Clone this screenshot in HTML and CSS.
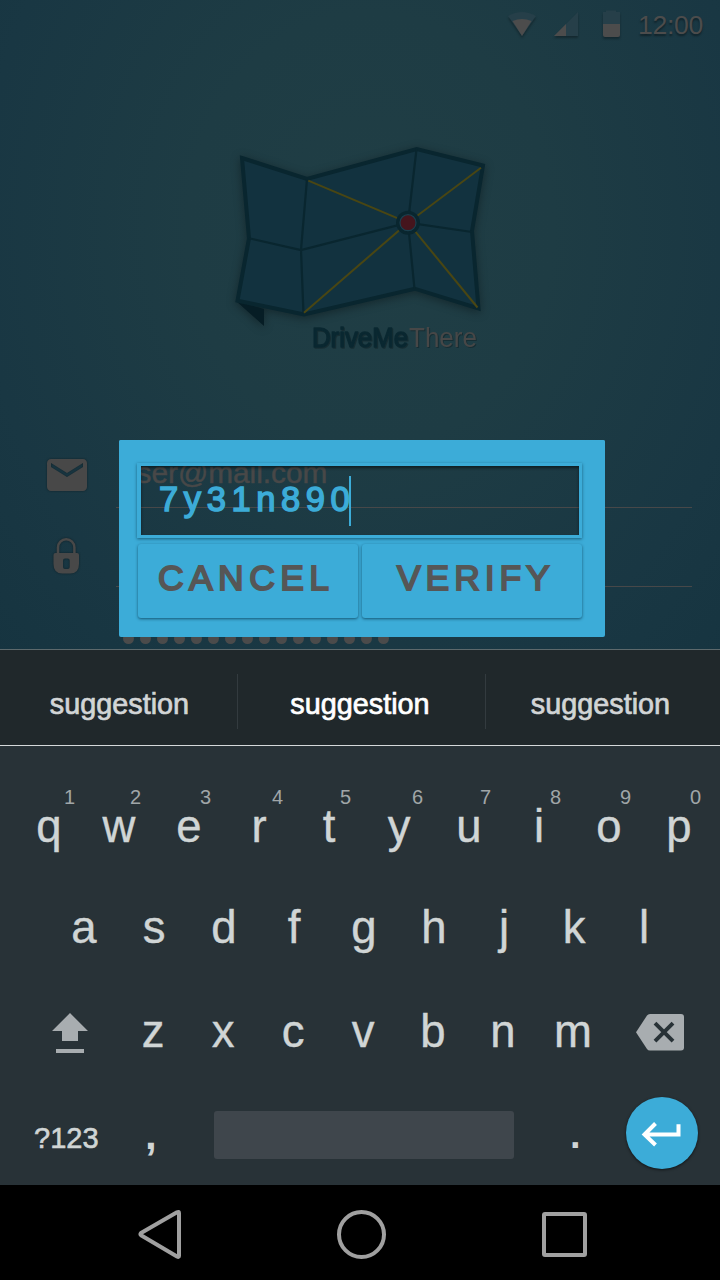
FILE: index.html
```html
<!DOCTYPE html>
<html lang="en">
<head>
<meta charset="utf-8">
<title>DriveMeThere</title>
<link rel="stylesheet" href="styles.css">
</head>
<body>
<div class="phone">
  <main class="login">
    <header class="status">
      <svg class="status-icons" width="126" height="50" viewBox="504 0 126 50">
        <path d="M508 16Q522 8 536 16L522 36Z" fill="#263f49"/>
        <path d="M512.500 21Q522 17 531.500 21L522 36Z" fill="#4c4c4c"/>
        <path d="M578 12V36H554Z" fill="#263f49"/>
        <path d="M566 24V36H554Z" fill="#4c4c4c"/>
        <path d="M603 12h3v-1.500h10v1.500h4V24h-17Z" fill="#263f49"/>
        <path d="M603 24h17v11q0 2-2 2h-13q-2 0-2-2Z" fill="#4c4c4c"/>
      </svg>
      <span class="clock">12:00</span>
    </header>

    <svg class="logo" width="280" height="230" viewBox="220 130 280 230">
      <g class="map">
        <path d="M236 301L264 309V326Z" fill="#061d25"/>
        <path d="M242 158L307 179L416.700 149L483 165.500L472 231L478.500 308.500L414.700 288.700L304 314.500L237.500 300.700L249 238.300Z" fill="#12323f" stroke="#09262f" stroke-width="4"/>
        <path d="M307 179L301 250L303.500 314M249 238.300L301 250L408 222.700L472 232M416.500 149L408 222.700L414.500 289" fill="none" stroke="#09262f" stroke-width="2.200"/>
        <path d="M308.300 180.700L408 222.700L481 167.700M304 312.700L408 222.700L477.500 307.500" fill="none" stroke="#494613" stroke-width="2"/>
      </g>
      <circle cx="408" cy="222.700" r="12" fill="#09262f"/>
      <circle cx="408" cy="222.700" r="8" fill="#45151d" stroke="#1b3f4e" stroke-width="1.200"/>
      <text class="brand brand-bold" x="312" y="346.500" textLength="96" lengthAdjust="spacingAndGlyphs">DriveMe</text>
      <text class="brand brand-light" x="409" y="346.500" textLength="68" lengthAdjust="spacingAndGlyphs">There</text>
    </svg>

    <div class="form">
      <div class="row">
        <div class="row-icon"><svg width="48" height="48" viewBox="0 0 24 24"><path fill="#484848" d="M20 4H4c-1.100 0-1.990.9-1.990 2L2 18c0 1.100.9 2 2 2h16c1.100 0 2-.9 2-2V6c0-1.100-.9-2-2-2zm0 4l-8 5-8-5V6l8 5 8-5v2z"/></svg></div>
        <div class="input">user@mail.com</div>
      </div>
      <div class="row row-lock">
        <div class="row-icon"><svg width="48" height="48" viewBox="0 0 48 48"><path d="M15 25V17.500a8.200 8.200 0 0 1 16.400 0V25" fill="none" stroke="#484848" stroke-width="2.500"/><path fill="#484848" fill-rule="evenodd" d="M12.500 23h21.500q2 0 2 2v9q0 9.500-9 9.500h-7.500q-9 0-9-9.500v-9q0-2 2-2ZM22 28.500q-2 0-2 2v6.500q0 2 2 2h2.700q2 0 2-2v-6.500q0-2-2-2Z"/></svg></div>
        <div class="input"></div>
      </div>
      <div class="dots"><i></i><i></i><i></i><i></i><i></i><i></i><i></i><i></i><i></i><i></i><i></i><i></i><i></i><i></i><i></i><i></i></div>
    </div>

    <section class="dialog">
      <div class="dialog-top">
        <div class="code"><span class="code-text">7y31n890</span><span class="caret"></span></div>
      </div>
      <div class="actions">
        <div class="button">CANCEL</div>
        <div class="button button-verify">VERIFY</div>
      </div>
    </section>
  </main>

  <div class="suggestions">
    <span>suggestion</span>
    <span class="current">suggestion</span>
    <span>suggestion</span>
  </div>

  <div class="keyboard">
    <div class="keys keys-top">
      <div class="key">q<sup>1</sup></div><div class="key">w<sup class="s2">2</sup></div><div class="key">e<sup class="s2">3</sup></div><div class="key">r<sup class="s4">4</sup></div><div class="key">t<sup class="s2">5</sup></div><div class="key">y<sup class="s3">6</sup></div><div class="key">u<sup class="s2">7</sup></div><div class="key">i<sup class="s2">8</sup></div><div class="key">o<sup class="s2">9</sup></div><div class="key">p<sup class="s2">0</sup></div>
    </div>
    <div class="keys keys-home">
      <div class="key">a</div><div class="key">s</div><div class="key">d</div><div class="key">f</div><div class="key">g</div><div class="key">h</div><div class="key">j</div><div class="key">k</div><div class="key">l</div>
    </div>
    <div class="keys">
      <div class="side"><svg width="36" height="42" viewBox="0 0 36 42"><path fill="#a8adb0" d="M18 0L36 18H26V28H10V18H0ZM4 36H32V40H4Z"/></svg></div>
      <div class="key">z</div><div class="key">x</div><div class="key">c</div><div class="key">v</div><div class="key">b</div><div class="key">n</div><div class="key">m</div>
      <div class="side side-right"><svg width="48" height="38" viewBox="0 0 48 38"><path fill="#a8adb0" d="M14 1H45Q48 1 48 4V34.500Q48 37.500 45 37.500H14Q12 37.500 11 36L0 19.200L11 2.500Q12 1 14 1Z"/><path d="M19 10.200L37 28.200M37 10.200L19 28.200" stroke="#283237" stroke-width="3.900"/></svg></div>
    </div>
    <div class="keys keys-bottom">
      <div class="mode">?123</div>
      <div class="punct">,</div>
      <div class="space"></div>
      <div class="punct dot">.</div>
      <div class="enter"><svg width="72" height="72" viewBox="0 0 72 72"><path d="M52.500 27.300V37.500H18M29.500 26.500L18.500 37.500L29.500 48" fill="none" stroke="#fff" stroke-width="4"/></svg></div>
    </div>
  </div>

  <nav class="nav">
    <svg width="720" height="95" viewBox="0 0 720 95" fill="none" stroke="#a0a0a0" stroke-width="4" stroke-linejoin="round">
      <path d="M141 48Q140 49.200 141 50.200L177 71.500Q179 72.500 179 71V28Q179 26.300 177 27.300Z"/>
      <circle cx="361.500" cy="49.500" r="22.500"/>
      <rect x="544" y="29" width="41" height="41" rx="1"/>
    </svg>
  </nav>
</div>
</body>
</html>
```

FILE: styles.css
```css
* { box-sizing: border-box; }
body { margin: 0; background: #000; font-family: "Liberation Sans", Arial, sans-serif; }
svg { display: block; }
.phone { width: 720px; height: 1280px; display: flex; flex-direction: column; overflow: hidden; }

.login {
  position: relative;
  height: 649px;
  overflow: hidden;
  background: radial-gradient(ellipse 520px 620px at 370px 230px, #203e45 0%, #1e3c44 35%, #193743 75%, #163440 100%);
}
.status { height: 50px; display: flex; justify-content: flex-end; align-items: center; padding-right: 18px; }
.status-icons { margin-right: 8px; filter: drop-shadow(0 2px 1px rgba(0, 0, 0, .3)); }
.clock { width: 64px; font-size: 26.500px; letter-spacing: -.3px; color: #4c4c4c; text-shadow: 0 2px 2px rgba(0, 0, 0, .4); white-space: nowrap; }
.logo { margin: 80px 0 0 220px; overflow: visible; }
.map { filter: drop-shadow(0 2px 5px rgba(0, 0, 0, .35)); }
.brand { font-size: 27px; filter: drop-shadow(1px 1px 0 rgba(0, 0, 0, .25)); }
.brand-bold { fill: #0a2831; stroke: #0a2831; stroke-width: 1.400px; stroke-linejoin: round; }
.brand-light { fill: #474747; }

.form { padding: 82px 28px 0 43px; }
.row { display: flex; height: 66px; }
.row-lock { height: 79px; }
.row-icon { width: 73px; padding-top: 9px; }
.row-lock .row-icon { padding-top: 22px; }
.row-icon svg { filter: drop-shadow(0 0 1px rgba(0, 0, 0, .4)); }
.input { flex: 1; border-bottom: 1px solid #474849; padding: 14px 0 0 4px; font-size: 29.800px; line-height: 34px; color: #484848; -webkit-text-stroke: .5px currentColor; }
.dots { display: flex; gap: 6px; padding: 46px 0 0 79.500px; }
.dots i { width: 11px; height: 11px; margin-right: .06px; border-radius: 50%; background: #4b4b4b; }

.dialog {
  position: absolute;
  left: 119px;
  top: 440px;
  width: 486px;
  height: 197px;
  border-radius: 2px;
  overflow: hidden;
  display: flex;
  flex-direction: column;
}
.dialog-top { position: relative; z-index: 1; height: 98px; border: solid #3cacd8; border-width: 23px 23px 0 18px; }
.code {
  display: flex;
  height: 75px;
  border: 3px solid #3cacd8;
  border-left-width: 4px;
  box-shadow: 0 1px 3px rgba(0, 40, 60, .6), inset 0 2px 3px rgba(0, 0, 0, .5);
  color: #3cacd8;
}
.code-text { padding: 12px 0 0 18px; font-size: 34.500px; line-height: 42px; -webkit-text-stroke: 1.500px currentColor; letter-spacing: 5.600px; width: 208px; white-space: nowrap; }
.caret { width: 2px; height: 50px; margin-top: 10px; background: #3cacd8; }
.actions { flex: 1; display: flex; gap: 4px; padding: 6px 23px 19px 19px; background: #3cacd8; }
.button {
  width: 220px;
  height: 74px;
  padding-left: 20px;
  border-radius: 3px;
  background: #3cacd8;
  box-shadow: 0 1px 3px rgba(0, 40, 60, .65);
  color: #565656;
  font-size: 35.500px;
  -webkit-text-stroke: 1.900px currentColor;
  line-height: 68px;
  letter-spacing: 5.400px;
}
.button-verify { padding-left: 35px; letter-spacing: 4.900px; }

.suggestions { height: 97px; display: grid; grid-template-columns: 237px 248px 235px; align-items: center; background: #20282b; border-top: 1px solid #5d696c; border-bottom: 1px solid #d5d9da; color: #d2d5d6; }
.suggestions span { height: 55px; line-height: 60px; text-align: center; font-size: 28.800px; -webkit-text-stroke: .7px currentColor; margin-top: 7px; padding-left: 2px; }
.suggestions span + span { border-left: 1px solid #333b3f; padding: 0 5px 0 0; }
.suggestions .current { color: #fff; padding-right: 3px; }

.keyboard { height: 439px; background: #283237; padding: 28px 0 0; color: #d0d5d5; }
.keys { display: flex; justify-content: center; height: 103px; }
.keys-top { padding-left: 8px; height: 102px; }
.keys-home { padding-left: 8px; }
.key { position: relative; width: 70px; text-align: center; font-size: 45.500px; line-height: 106px; -webkit-text-stroke: .4px currentColor; }
.keys-home .key { line-height: 104px; }
.key sup { position: absolute; left: 50px; top: 13px; line-height: 20px; font-size: 20px; color: #a0a6a8; -webkit-text-stroke: 0; }
.key .s2 { left: 46px; }
.key .s3 { left: 48px; }
.key .s4 { left: 48px; }
.side { width: 118px; padding: 34px 0 0 52px; }
.side-right { width: 112px; padding: 34px 0 0 28px; }
.keys-bottom { justify-content: flex-start; align-items: flex-start; height: 90px; padding-top: 15px; }
.mode { width: 110px; padding: 25px 0 0 34px; font-size: 29px; line-height: 32px; -webkit-text-stroke: .6px currentColor; }
.punct { width: 104px; padding: 15px 0 0 35px; font-size: 42px; line-height: 46px; font-weight: bold; }
.space { width: 300px; height: 48px; margin-top: 14px; border-radius: 3px; background: #3f464c; }
.punct.dot { width: 112px; padding-left: 56px; font-size: 38px; }
.enter { width: 72px; height: 72px; border-radius: 50%; background: #3cacd8; box-shadow: 0 1px 3px rgba(0, 0, 0, .6); }
.nav { height: 95px; background: #000; }
```
